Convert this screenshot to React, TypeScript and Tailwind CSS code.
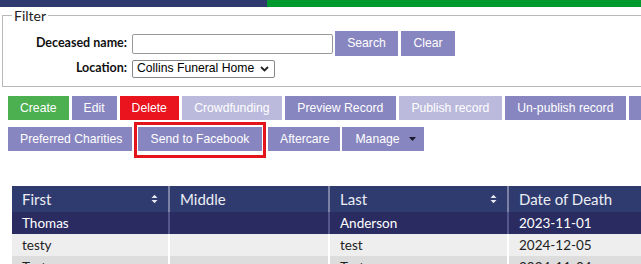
const lavender = 'bg-[#8886c0]';

function Btn({ label, color = lavender, className = '' }: { label: string; color?: string; className?: string }) {
  return (
    <button
      className={`h-[24px] shrink-0 px-3 text-[12.2px] leading-none text-white font-['Liberation_Sans',Arial,sans-serif] ${color} ${className}`}
    >
      {label}
    </button>
  );
}

function SortIcon() {
  return (
    <svg width="7" height="10" viewBox="0 0 7 10" className="text-[#e8eaf2]">
      <path d="M0.5 4 L3.5 0.8 L6.5 4 Z" fill="currentColor" />
      <path d="M0.5 6 L3.5 9.2 L6.5 6 Z" fill="currentColor" />
    </svg>
  );
}

const rows = [
  { first: 'Thomas', middle: '', last: 'Anderson', date: '2023-11-01', bg: 'bg-[#2a2c61] text-white' },
  { first: 'testy', middle: '', last: 'test', date: '2024-12-05', bg: 'bg-[#eeeeee] text-[#222]' },
  { first: 'Test', middle: '', last: 'Test', date: '2024-11-04', bg: 'bg-[#dddddd] text-[#222]' },
];

export default function App() {
  return (
    <div className="relative w-[641px] h-[264px] overflow-hidden bg-white">
      {/* top strip */}
      <div className="flex h-[7px]">
        <div className="w-[267px] bg-[#2e3a6e]" />
        <div className="flex-1 bg-[#009a2e]" />
      </div>

      {/* Filter */}
      <fieldset className="ml-[2px] w-[700px] h-[80px] border border-[#b8b8b8] pl-[9px]">
        <legend className="px-[2px] text-[14px] leading-[17px] text-[#222] font-['Lato',sans-serif]">Filter</legend>
        <div className="mt-[7px] grid grid-cols-[115px_auto] gap-x-[5px] gap-y-[3px] items-center">
          <label className="text-right text-[12.5px] font-bold text-[#111] font-['Lato',sans-serif]">Deceased name:</label>
          <div className="flex items-center h-[25px]">
            <input className="w-[201px] h-[20px] border border-[#999] rounded-[2px] bg-white" />
            <Btn label="Search" className="ml-[2px] h-[25px] w-[63px] px-0" />
            <Btn label="Clear" className="ml-[3px] h-[25px] w-[54px] px-0" />
          </div>
          <label className="text-right text-[12.5px] font-bold text-[#111] font-['Lato',sans-serif]">Location:</label>
          <div className="flex items-center h-[19px]">
            <div className="flex items-center justify-between w-[143px] h-[18px] border border-[#888] rounded-[2px] pl-[4px] pr-[5px] text-[12.2px] text-black font-['Liberation_Sans',Arial,sans-serif]">
              <span>Collins Funeral Home</span>
              <svg width="9" height="6" viewBox="0 0 9 6">
                <path d="M1 1 L4.5 4.5 L8 1" stroke="#222" strokeWidth="1.8" fill="none" />
              </svg>
            </div>
          </div>
        </div>
      </fieldset>

      {/* action buttons */}
      <div className="mt-[9px] ml-[8px] flex gap-[3px] whitespace-nowrap">
        <Btn label="Create" color="bg-[#4caf50]" />
        <Btn label="Edit" />
        <Btn label="Delete" color="bg-[#e9141e]" />
        <Btn label="Crowdfunding" color="bg-[#bbbadc]" className="w-[100px] px-0" />
        <Btn label="Preview Record" className="w-[111px] px-0" />
        <Btn label="Publish record" color="bg-[#bbbadc]" className="w-[103px] px-0" />
        <Btn label="Un-publish record" className="w-[121px] px-0" />
        <Btn label="Print" />
      </div>
      <div className="mt-[7px] ml-[8px] flex whitespace-nowrap">
        <Btn label="Preferred Charities" className="w-[124px] px-0" />
        <Btn label="Send to Facebook" className="ml-[6px] w-[124px] px-0" />
        <Btn label="Aftercare" className="ml-[6px] w-[72px] px-0" />
        <button className="ml-[2px] h-[24px] w-[82px] flex items-center justify-center gap-[9px] bg-[#8886c0] text-white text-[12.2px] font-['Liberation_Sans',Arial,sans-serif]">
          <span className="ml-[5px]">Manage</span>
          <svg width="7" height="4" viewBox="0 0 7 4">
            <path d="M0 0 L7 0 L3.5 4 Z" fill="#1a1a2a" />
          </svg>
        </button>
      </div>

      {/* annotation highlight */}
      <div className="absolute left-[134px] top-[122px] w-[132px] h-[36px] border-[3px] border-[#e3141c]" />

      {/* table */}
      <table className="mt-[35px] ml-[12px] w-[720px] table-fixed border-collapse font-['Lato',sans-serif]">
        <colgroup>
          <col className="w-[157px]" />
          <col className="w-[160px]" />
          <col className="w-[179px]" />
          <col className="w-[224px]" />
        </colgroup>
        <thead>
          <tr className="h-[26px] bg-[#2f3b6f] text-[#eceef5] text-[15px] text-left">
            <th className="pl-[10px] pr-[10px] font-normal">
              <div className="flex items-center justify-between">
                <span>First</span>
                <SortIcon />
              </div>
            </th>
            <th className="pl-[10px] font-normal border-l-2 border-[#7c81a6]">Middle</th>
            <th className="pl-[10px] pr-[10px] font-normal border-l-2 border-[#7c81a6]">
              <div className="flex items-center justify-between">
                <span>Last</span>
                <SortIcon />
              </div>
            </th>
            <th className="pl-[10px] font-normal border-l-2 border-[#7c81a6]">Date of Death</th>
          </tr>
        </thead>
        <tbody>
          {rows.map((r, i) => (
            <tr key={i} className={`h-[22px] text-[13.5px] ${r.bg}`}>
              <td className="pl-[10px]">{r.first}</td>
              <td className={`pl-[10px] border-l-2 ${i === 0 ? 'border-[#54578a]' : 'border-white'}`}>{r.middle}</td>
              <td className={`pl-[10px] border-l-2 ${i === 0 ? 'border-[#54578a]' : 'border-white'}`}>{r.last}</td>
              <td className={`pl-[10px] border-l-2 ${i === 0 ? 'border-[#54578a]' : 'border-white'}`}>{r.date}</td>
            </tr>
          ))}
        </tbody>
      </table>
    </div>
  );
}
